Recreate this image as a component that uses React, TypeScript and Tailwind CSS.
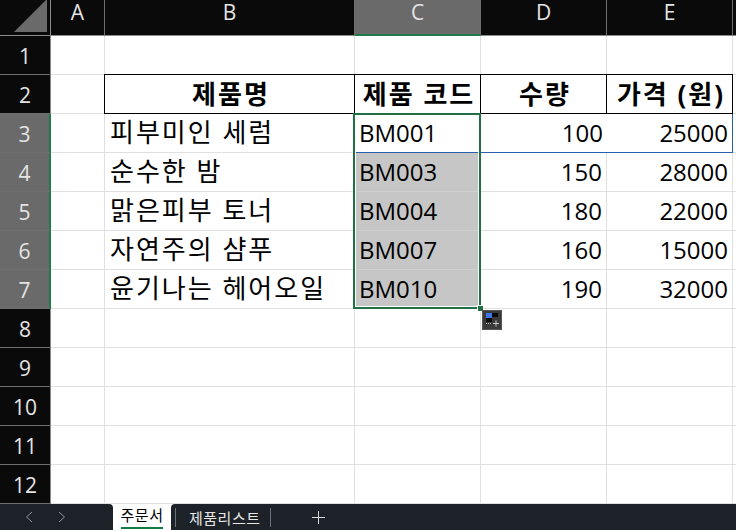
const font = "font-['Open_Sans','Noto_Sans_CJK_KR',sans-serif]";
const cols = ["A", "B", "C", "D", "E"];
const data: Record<number, string[]> = {
  3: ["피부미인 세럼", "BM001", "100", "25000"],
  4: ["순수한 밤", "BM003", "150", "28000"],
  5: ["맑은피부 토너", "BM004", "180", "22000"],
  6: ["자연주의 샴푸", "BM007", "160", "15000"],
  7: ["윤기나는 헤어오일", "BM010", "190", "32000"],
};
const heads = ["제품명", "제품 코드", "수량", "가격 (원)"];
const rows = [1, 2, 3, 4, 5, 6, 7, 8, 9, 10, 11, 12];

function Cell({ r, c }: { r: number; c: number }) {
  const base = "flex items-center leading-none text-black overflow-visible whitespace-nowrap ";
  if (r === 2 && c >= 1) {
    return (
      <div
        className={
          base +
          "justify-center pl-[3px] font-bold border-y border-r border-black -mt-px text-[26px] tracking-[2px] " +
          (c === 1 ? "border-l -ml-px" : "")
        }
      >
        {heads[c - 1]}
      </div>
    );
  }
  const row = data[r];
  if (row && c >= 1) {
    const selected = c === 2 && r > 3;
    const blue = r === 3 && c >= 2;
    const size = c === 1 ? "text-[26px] tracking-[2px] pb-[2px] " : "text-[24px] ";
    const cls = selected
      ? "bg-[#c6c6c6] pl-[4px] border-b border-r border-[#d0d0d0]"
      : c === 1
        ? "pl-[5px] border-b border-r border-[#e0e0e0]"
        : c === 2
          ? "pl-[4px] border-b border-[#2a5fb0]"
          : blue
            ? "justify-end pr-1 border-b border-[#2a5fb0] " + (c === 4 ? "border-r" : "")
            : "justify-end pr-1 border-b border-r border-[#e0e0e0]";
    return <div className={base + size + cls}>{row[c - 1]}</div>;
  }
  return <div className="border-b border-r border-[#e0e0e0]" />;
}

export default function App() {
  return (
    <div className={"relative flex h-[530px] w-[736px] flex-col overflow-hidden bg-white " + font}>
      <div className="relative grid h-[504px] grid-cols-[51px_54px_250px_126px_126px_126px_3px] grid-rows-[36px_repeat(12,39px)]">
        <div className="flex items-end justify-end border-r border-b border-[#8a8a8a] bg-[#0a0a0a] p-[3px]">
          <svg width="33" height="33" viewBox="0 0 33 33">
            <polygon points="33,0 33,33 0,33" fill="#6a6a6a" />
          </svg>
        </div>
        {cols.map((h) => (
          <div
            key={h}
            className={
              "flex items-center justify-center border-r border-[#6f6f6f] pb-[10px] text-[21px] leading-none text-[#e4e4e4] " +
              (h === "C" ? "border-b-2 border-b-[#1f7a4d] bg-[#6a6a6a]" : "border-b border-b-[#8a8a8a] bg-[#0a0a0a]")
            }
          >
            {h}
          </div>
        ))}
        <div className="border-b border-b-[#8a8a8a] bg-[#0a0a0a]" />
        {rows.map((r) => {
          const active = r >= 3 && r <= 7;
          return [
            <div
              key={"h" + r}
              className={
                "flex items-center justify-center border-b border-[#6f6f6f] pt-[2px] text-[21px] leading-none text-[#e4e4e4] " +
                (active ? "border-r-2 border-r-[#1f7a4d] bg-[#6a6a6a]" : "border-r border-r-[#8a8a8a] bg-[#0a0a0a]")
              }
            >
              {r}
            </div>,
            ...[0, 1, 2, 3, 4].map((c) => <Cell key={r + "-" + c} r={r} c={c} />),
            <div key={"x" + r} className="border-b border-[#e0e0e0]" />,
          ];
        })}
        <div className="pointer-events-none absolute left-[353px] top-[113px] h-[196px] w-[128px] border-2 border-[#1f7145] shadow-[inset_0_0_0_1px_white]" />
        <div className="absolute left-[477px] top-[305px] h-[7px] w-[7px] border border-white bg-[#1f7145]" />
        <div className="absolute left-[482px] top-[310px] flex h-5 w-5 items-center justify-center border border-[#555] bg-[#3a3a3a]">
          <svg width="18" height="18" viewBox="0 0 18 18">
            <rect x="3" y="2" width="6" height="5" fill="#3f74e8" />
            <rect x="9" y="2" width="6" height="4" fill="#0a0a0a" />
            <rect x="3" y="7" width="6" height="4" fill="#0a0a0a" />
            <path d="M3 12.5h6" stroke="#bdbdbd" strokeDasharray="1 1" />
            <path d="M13 9.5v6M10 12.5h6" stroke="#c8c8c8" />
          </svg>
        </div>
      </div>
      <div className="flex h-[26px] items-stretch bg-white text-[15px] leading-none tracking-[0.5px]">
        <div className="flex w-[113px] items-center rounded-tr-[4px] bg-[#1d2229] pl-[25px] text-[#8f959c]">
          <svg width="8" height="12" viewBox="0 0 8 12" fill="none" stroke="currentColor">
            <path d="M7 1 1.5 6 7 11" />
          </svg>
          <svg className="ml-[25px]" width="8" height="12" viewBox="0 0 8 12" fill="none" stroke="currentColor">
            <path d="M1 1 6.5 6 1 11" />
          </svg>
        </div>
        <div className="relative flex w-[58px] items-center justify-center pb-[3px] text-black">
          주문서
          <div className="absolute bottom-[1px] left-[8px] right-[8px] h-[2px] bg-[#107c41]" />
        </div>
        <div className="flex flex-1 items-center rounded-tl-[4px] bg-[#1d2229] text-[#e6e6e6]">
          <div className="ml-[4px] h-[19px] w-px bg-[#6c7278]" />
          <div className="w-[94px] pl-[13px] pt-[3px]">제품리스트</div>
          <div className="h-[19px] w-px bg-[#6c7278]" />
          <svg className="ml-[41px]" width="13" height="13" viewBox="0 0 13 13" stroke="#d8d8d8">
            <path d="M6.5 0v13M0 6.5h13" />
          </svg>
        </div>
      </div>
    </div>
  );
}
